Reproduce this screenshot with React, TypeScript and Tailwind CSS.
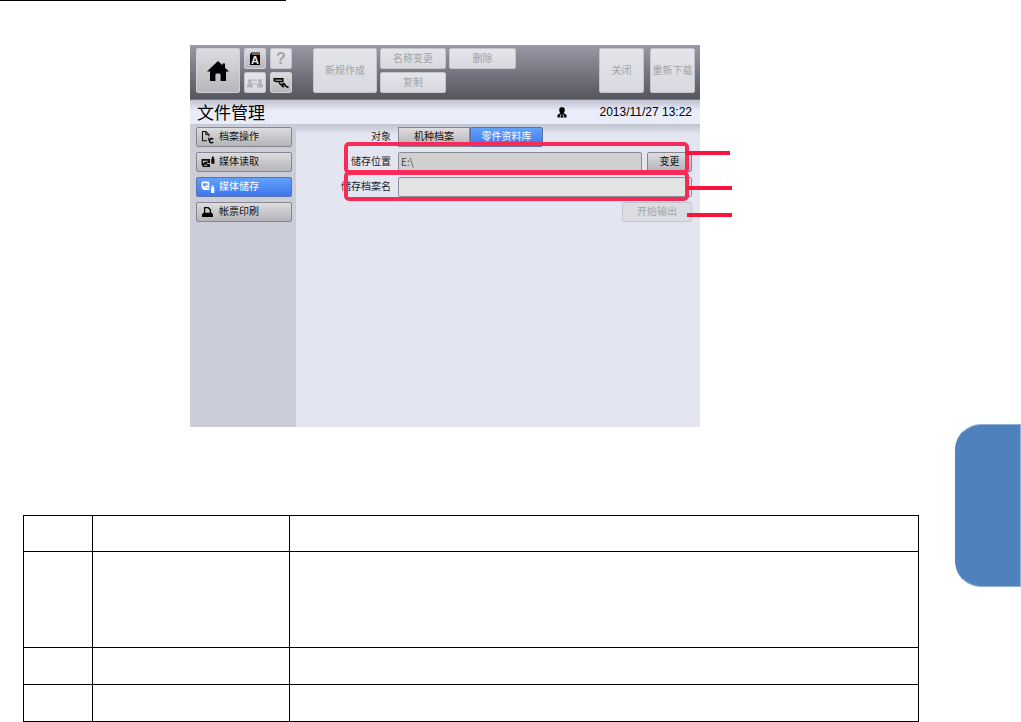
import React from 'react';
import clsx from 'clsx';

interface ToolButtonProps {
  label?: string;
  disabled?: boolean;
  className?: string;
  children?: React.ReactNode;
}

const ToolButton = ({ label, disabled, className, children }: ToolButtonProps) => (
  <button
    type="button"
    aria-label={label}
    disabled={disabled}
    className={clsx(
      'flex items-center justify-center rounded-[2px] border text-[10px] leading-4 whitespace-nowrap',
      disabled
        ? 'border-[#c4c5cb] bg-linear-to-b from-[#e4e5ea] to-[#d8d9df] text-[#a3a3a6]'
        : 'border-[#d0d0d6] bg-linear-to-b from-[#dddde1] to-[#b6b6bb] text-black',
      className,
    )}
  >
    {children}
  </button>
);

const HomeIcon = () => (
  <svg width="22" height="20" viewBox="0 0 22 20" fill="#000">
    <path d="M11 0 L15.5 4.3 V2.5 H18 V6.7 L22 10.5 H19 V20 H13.6 V14 Q13.6 12.5 12.5 12.5 H9.5 Q8.4 12.5 8.4 14 V20 H3 V10.5 H0 Z" />
  </svg>
);

const BookIcon = () => (
  <svg width="12" height="14" viewBox="0 0 12 14">
    <path d="M1 2.5 L2.5 0.5 H11 V1.5 H3 L2.5 2.5 H11 V13 H1 Z" fill="#000" />
    <text x="6" y="11.5" textAnchor="middle" fontSize="11" fontWeight="700" fontFamily="Liberation Sans, sans-serif" fill="#e8e8ec">
      A
    </text>
  </svg>
);

const UsersIcon = () => (
  <svg width="16" height="10" viewBox="0 0 16 10" fill="#b2b3b8">
    <circle cx="3" cy="3" r="2.1" />
    <path d="M0 9.5 V7 L1.8 5 H4.2 L6 7 V9.5 Z" />
    <circle cx="13" cy="3" r="2.1" />
    <path d="M10 9.5 V7 L11.8 5 H14.2 L16 7 V9.5 Z" />
    <path d="M6 1.5 H10 V2.7 H6.8 V3.5 H6 Z M6.5 5 H10 V6.2 H6.5 Z" />
  </svg>
);

const ScannerIcon = () => (
  <svg width="16" height="12" viewBox="0 0 16 12">
    <path d="M1.2 1.7 H9.8 V4.6 H3.5 L1.2 3.8 Z" fill="#8b8c90" stroke="#000" strokeWidth="1.4" />
    <path d="M6 5.5 L7.5 7.5 H9.5" fill="none" stroke="#000" strokeWidth="1.4" />
    <path d="M10.8 5.8 L9 9 L11 10 M11 6.5 L12.5 9 L15.5 10.5" fill="none" stroke="#000" strokeWidth="1.5" />
  </svg>
);

const OperatorIcon = () => (
  <svg width="10" height="11" viewBox="0 0 10 11">
    <rect x="2.3" y="0.3" width="5.4" height="6" rx="2.2" fill="#000" />
    <path d="M0.5 10.5 V8 L3.5 6 H6.5 L9.5 8 V10.5 Z" fill="#000" />
    <path d="M4 7.3 L3 10.5 M6 7.3 L7 10.5" stroke="#e9ecf8" strokeWidth="0.8" />
  </svg>
);

const FileIcon = () => (
  <svg width="14" height="14" viewBox="0 0 14 14" fill="none" stroke="#111">
    <path d="M6 10.8 H1.5 V1.5 H4.8 L8 4.7 V6.5" strokeWidth="1.1" />
    <path d="M4.8 1.5 V4.7 H8" strokeWidth="1" />
    <path d="M12.3 9.2 A2.3 2.3 0 0 0 8.3 10.6 A2.2 2.2 0 0 0 12.2 12" strokeWidth="1.5" />
    <path d="M7.2 7.8 L8.3 10.3 L10.5 9" strokeWidth="1.1" />
  </svg>
);

const ReadIcon = () => (
  <svg width="14" height="14" viewBox="0 0 14 14">
    <path d="M0.5 4 H9 V12 H2 L0.5 9.5 Z" fill="#111" />
    <path d="M2 5.7 H6.8 V6.8 H3.3 V8 H2 Z" fill="#c5c5c9" />
    <path d="M3 10.3 H6.3 M6 8.5 H9.5" fill="none" stroke="#c5c5c9" strokeWidth="0.9" />
    <path d="M10.2 3.5 H13.5 V8.8 H10.2 Z M10.9 1.5 H12.8 V3.5 H10.9 Z" fill="#111" />
  </svg>
);

const SaveIcon = () => (
  <svg width="14" height="14" viewBox="0 0 14 14">
    <path d="M0.5 2.5 L1.5 1.5 H7.5 L8.3 2.5 V8.5 L9 10 H2.5 L0.5 7.5 Z" fill="#fff" />
    <path d="M2 3.3 H6.5 V6.2 H2 Z" fill="#5796f8" />
    <path d="M4 5.2 H7 L9.2 7.2 L7 9 V7.8 H4 Z" fill="#fff" stroke="#5796f8" strokeWidth="0.5" />
    <path d="M10 7.5 H13.3 V13 H10 Z M10.8 5.5 H12.5 V7.5 H10.8 Z" fill="#fff" />
  </svg>
);

const PrintIcon = () => (
  <svg width="14" height="14" viewBox="0 0 14 14">
    <path d="M3.6 8.5 V2.7 H7.3 L9.4 4.8 V8.5" fill="none" stroke="#000" strokeWidth="1.3" />
    <path d="M2.5 7.8 H10.5 L12 9.3 V12 H1 V9.3 Z" fill="#000" />
  </svg>
);

const menuItems = [
  { label: '档案操作', icon: <FileIcon /> },
  { label: '媒体读取', icon: <ReadIcon /> },
  { label: '媒体储存', icon: <SaveIcon />, active: true },
  { label: '帐票印刷', icon: <PrintIcon /> },
];

const tableRows = ['h-9', 'h-24', 'h-[37px]', 'h-[37px]'];

const Toolbar = () => (
  <header className="flex h-[55px] items-start justify-between border-b border-[#77787e] bg-linear-to-b from-[#9a9aa8] to-[#55565d] pt-[3px] pr-[5px] pl-[6px]">
    <div className="flex h-[45px]">
      <ToolButton label="主页" className="w-11">
        <HomeIcon />
      </ToolButton>
      <div className="ml-1 grid grid-cols-[22px_22px] grid-rows-2 gap-x-1 gap-y-[3px]">
        <ToolButton label="手册">
          <BookIcon />
        </ToolButton>
        <ToolButton label="帮助" disabled>
          <span className="text-[16px] font-bold">?</span>
        </ToolButton>
        <ToolButton label="用户" disabled>
          <UsersIcon />
        </ToolButton>
        <ToolButton label="扫描">
          <ScannerIcon />
        </ToolButton>
      </div>
      <div className="ml-[21px] grid grid-cols-[64px_66px_67px] grid-rows-2 gap-[3px]">
        <ToolButton disabled className="row-span-2">新规作成</ToolButton>
        <ToolButton disabled>名称变更</ToolButton>
        <ToolButton disabled>删除</ToolButton>
        <ToolButton disabled>复制</ToolButton>
      </div>
    </div>
    <div className="flex h-[45px] gap-[6px]">
      <ToolButton disabled className="w-[45px]">关闭</ToolButton>
      <ToolButton disabled className="w-[45px]">重新下载</ToolButton>
    </div>
  </header>
);

const Sidebar = () => (
  <nav className="flex w-[106px] flex-col gap-[5px] bg-[#cbcdd9] pt-[2px] pr-1 pl-[6px]">
    {menuItems.map((item) => (
      <button
        key={item.label}
        type="button"
        className={clsx(
          'flex h-5 items-center gap-1 rounded-[2px] border pl-1 text-[10px] leading-4',
          item.active
            ? 'border-[#5c74a8] bg-linear-to-b from-[#62a2fb] to-[#3f75ee] text-white'
            : 'border-[#86878e] bg-linear-to-b from-[#dddde0] to-[#b4b4b9] text-[#111]',
        )}
      >
        {item.icon}
        {item.label}
      </button>
    ))}
  </nav>
);

const ExportForm = () => {
  const [fileName, setFileName] = React.useState('');

  return (
    <form className="grid flex-1 auto-rows-[20px] grid-cols-[95px_1fr] items-center gap-x-[7px] gap-y-[5px] bg-linear-to-b from-[#c2c4d0] to-[#e3e5f1] to-[9px] pt-[2px] pr-2 text-[10px] leading-4 text-[#222]">
      <span className="text-right">对象</span>
      <div className="flex h-5">
        <button type="button" className="w-[72px] border border-[#86878e] bg-linear-to-b from-[#dddde0] to-[#b4b4b9] text-[#111]">
          机种档案
        </button>
        <button type="button" className="w-[73px] rounded-r-[2px] border border-[#5c74a8] bg-linear-to-b from-[#62a2fb] to-[#3f75ee] text-white">
          零件资料库
        </button>
      </div>

      <label htmlFor="location" className="text-right">储存位置</label>
      <div className="flex h-5 gap-[5px]">
        <input
          id="location"
          value="E:\"
          readOnly
          className="min-w-0 flex-1 rounded-[2px] border border-[#8b8d96] bg-[#d0d0d1] px-[2px] font-['Noto_Sans_CJK_SC',sans-serif] text-[#444]"
        />
        <button type="button" className="w-[45px] rounded-[2px] border border-[#86878e] bg-linear-to-b from-[#dddde0] to-[#b4b4b9] text-[#111]">
          变更
        </button>
      </div>

      <label htmlFor="fileName" className="text-right whitespace-nowrap">储存档案名</label>
      <input
        id="fileName"
        value={fileName}
        onChange={(e) => setFileName(e.target.value)}
        className="h-5 w-full rounded-[2px] border border-[#8b8d96] bg-[#e4e4e4] px-[2px]"
      />

      <button
        type="button"
        disabled
        className="col-start-2 h-5 w-[70px] justify-self-end rounded-[2px] border border-[#c6c7cd] bg-[#dcdde2] text-[#a3a3a6]"
      >
        开始输出
      </button>
    </form>
  );
};

const Callouts = () => (
  <div className="pointer-events-none">
    <div className="absolute top-[97px] right-[11px] left-[154px] h-8 rounded-[5px] border-4 border-[#f82a58]" />
    <div className="absolute top-[126px] right-[11px] left-[154px] h-[30px] rounded-[5px] border-4 border-[#f82a58]" />
    <div className="absolute top-[106px] -right-[30px] h-1 w-11 bg-[#f8143c]" />
    <div className="absolute top-[141px] -right-8 h-1 w-[45px] bg-[#f8143c]" />
    <div className="absolute top-[168px] -right-8 h-1 w-[45px] bg-[#f8143c]" />
  </div>
);

const App = () => {
  return (
    <div className="flex bg-white font-['Liberation_Sans','Noto_Sans_CJK_SC',sans-serif]">
      <main className="min-w-0 flex-1">
        <hr className="w-[286px] border-t border-black" />

        <section className="relative mt-11 mr-[255px] ml-[190px]">
          <Toolbar />
          <div className="flex h-[25px] items-end border-b border-[#c5c8d4] bg-linear-to-b from-[#c0c1d0] to-[#e9edf9] to-[11px] pr-2 pl-[7px] text-black">
            <h1 className="text-[17px] leading-5">文件管理</h1>
            <div className="ml-auto flex items-center gap-8 text-[12px] leading-6">
              <OperatorIcon />
              <time>2013/11/27 13:22</time>
            </div>
          </div>
          <div className="flex min-h-[302px]">
            <Sidebar />
            <ExportForm />
          </div>
          <Callouts />
        </section>

        <div className="mt-[88px] mr-9 ml-[23px]">
          <table className="w-full table-fixed border-collapse">
            <colgroup>
              <col className="w-[69px]" />
              <col className="w-[197px]" />
              <col />
            </colgroup>
            <tbody>
              {tableRows.map((height, index) => (
                <tr key={index} className={height}>
                  <td className="border border-black" />
                  <td className="border border-black" />
                  <td className="border border-black" />
                </tr>
              ))}
            </tbody>
          </table>
        </div>
      </main>

      <aside className="mt-[424px] h-[163px] w-[66px] rounded-l-[26px] border border-[#8fb0d8] border-l-[#4f81bd] bg-[#4f81bd]" />
    </div>
  );
};

export default App;
